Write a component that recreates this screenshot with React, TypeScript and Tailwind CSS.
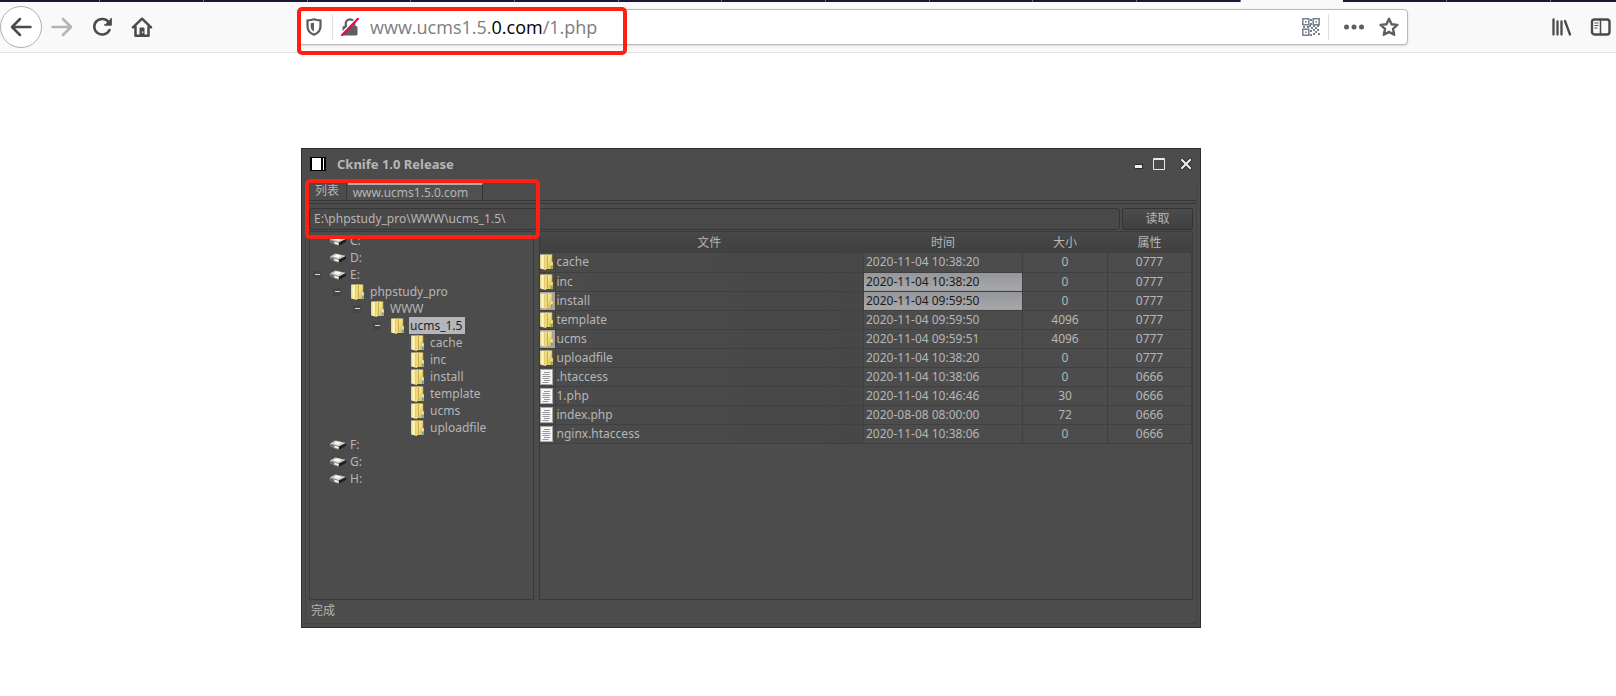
import type { ReactNode } from 'react';

type Entry = {
  name: string;
  time: string;
  size: string;
  attr: string;
  kind: 'dir' | 'file';
  iconLit?: boolean;
  timeLit?: boolean;
};

const entries: Entry[] = [
  { name: 'cache', time: '2020-11-04 10:38:20', size: '0', attr: '0777', kind: 'dir' },
  { name: 'inc', time: '2020-11-04 10:38:20', size: '0', attr: '0777', kind: 'dir', timeLit: true },
  { name: 'install', time: '2020-11-04 09:59:50', size: '0', attr: '0777', kind: 'dir', iconLit: true, timeLit: true },
  { name: 'template', time: '2020-11-04 09:59:50', size: '4096', attr: '0777', kind: 'dir' },
  { name: 'ucms', time: '2020-11-04 09:59:51', size: '4096', attr: '0777', kind: 'dir', iconLit: true },
  { name: 'uploadfile', time: '2020-11-04 10:38:20', size: '0', attr: '0777', kind: 'dir' },
  { name: '.htaccess', time: '2020-11-04 10:38:06', size: '0', attr: '0666', kind: 'file' },
  { name: '1.php', time: '2020-11-04 10:46:46', size: '30', attr: '0666', kind: 'file' },
  { name: 'index.php', time: '2020-08-08 08:00:00', size: '72', attr: '0666', kind: 'file' },
  { name: 'nginx.htaccess', time: '2020-11-04 10:38:06', size: '0', attr: '0666', kind: 'file' },
];

type Node = { label: string; level: number; open?: boolean; selected?: boolean };

const nodes: Node[] = [
  { label: 'C:', level: 0 },
  { label: 'D:', level: 0 },
  { label: 'E:', level: 0, open: true },
  { label: 'phpstudy_pro', level: 1, open: true },
  { label: 'WWW', level: 2, open: true },
  { label: 'ucms_1.5', level: 3, open: true, selected: true },
  { label: 'cache', level: 4 },
  { label: 'inc', level: 4 },
  { label: 'install', level: 4 },
  { label: 'template', level: 4 },
  { label: 'ucms', level: 4 },
  { label: 'uploadfile', level: 4 },
  { label: 'F:', level: 0 },
  { label: 'G:', level: 0 },
  { label: 'H:', level: 0 },
];

const indent = ['pl-[3px]', 'pl-[23px]', 'pl-[43px]', 'pl-[63px]', 'pl-[83px]'];

function FolderIcon() {
  return (
    <svg width="14" height="16" viewBox="0 0 14 16" className="shrink-0" aria-hidden="true">
      <defs>
        <linearGradient id="folderBack" x1="0" x2="1">
          <stop offset="0" stopColor="#e2cc6e" />
          <stop offset="0.4" stopColor="#fdf8c4" />
          <stop offset="1" stopColor="#e9d67c" />
        </linearGradient>
        <linearGradient id="folderFront" x1="0" x2="1" y2="1">
          <stop offset="0" stopColor="#fdf6b8" />
          <stop offset="0.5" stopColor="#ecd97c" />
          <stop offset="1" stopColor="#cfa92c" />
        </linearGradient>
      </defs>
      <path d="M0 .5h6V16L0 14.500z" fill="url(#folderBack)" />
      <path d="M6 .5h6v7l1 .8V15H6z" fill="url(#folderFront)" />
      <path d="M4.500 1.500L7.500 0v14.300L5 16z" fill="#ecd983" />
      <path d="M7.500 .5v13.800" stroke="#c4a136" strokeWidth=".8" />
      <path d="M4.500 2v13.500" stroke="#d8bf5c" strokeWidth=".6" />
      <path d="M12 .5v7" stroke="#c5a53c" strokeWidth=".6" />
      <rect x="11.200" y="11.500" width="1.200" height="3" fill="#3a9bd0" />
      <rect x="11.200" y="8.800" width="1.200" height="2.500" fill="#f8f5dc" />
    </svg>
  );
}

function FileIcon() {
  return (
    <svg width="14" height="16" viewBox="0 0 14 16" className="shrink-0" aria-hidden="true">
      <rect x=".5" y=".5" width="12" height="15" fill="#f6f6f6" stroke="#a8a8a8" />
      <path d="M4 3.500h6M2.500 5.500h7M2.500 7.500h8M2.500 9.500h7M4 11.500h6M2.500 13.500h6" stroke="#979797" />
    </svg>
  );
}

function DriveIcon() {
  return (
    <svg width="16" height="10" viewBox="0 0 16 10" className="shrink-0" aria-hidden="true">
      <path d="M0 3.500L5.500 .5 16 3v3L9.500 9.800 6 9 0 6z" fill="#777" />
      <path d="M0 3.500L5.500 .5 16 3 9 6.500z" fill="#c9c9c9" />
      <path d="M3.500 3.200l3.200-1.700 4.800 1.300-3.300 1.900z" fill="#fff" />
      <path d="M0 3.600l9 3v3L6 9 0 6z" fill="#8e8e8e" />
      <path d="M9 6.500L16 3v3L9.500 9.800 9 9.600z" fill="#1f1f1f" />
      <path d="M4.500 6.500l4 1.400" stroke="#fff" strokeWidth="1.600" />
      <path d="M1 5.500l2.500 1" stroke="#444" />
    </svg>
  );
}

function ToolButton({ label, children, className }: { label: string; children: ReactNode; className?: string }) {
  return (
    <button type="button" aria-label={label} className={`flex shrink-0 items-center justify-center ${className ?? ''}`}>
      {children}
    </button>
  );
}

function stripTab(i: number) {
  if (i === 12) return 'w-[102px] shrink-0 bg-[#f9f9fa]';
  if (i === 0) return 'w-[100px] shrink-0 border-r border-[#6d6c84]';
  if (i < 12 && i % 3 === 0) return 'w-[103px] shrink-0 border-r border-[#6d6c84]';
  return 'w-[104px] shrink-0 border-r border-[#6d6c84]';
}

function BrowserBar() {
  return (
    <header className="relative border-b border-[#e1e1e1] bg-[#f9f9fa]">
      <div className="flex h-[2px] overflow-hidden bg-[#1a1838]" aria-hidden="true">
        {Array.from({ length: 16 }, (_, i) => (
          <div key={i} className={stripTab(i)} />
        ))}
      </div>
      <div className="flex h-[50px] items-center pr-1">
        <ToolButton label="Back" className="size-[42px] rounded-full border border-[#b1b1b3] bg-white">
          <svg width="22" height="20" viewBox="0 0 22 20" fill="none" stroke="#4a4a4f" strokeWidth="2.500" strokeLinecap="round" strokeLinejoin="round">
            <path d="M10 2L2 10l8 8M2.500 10H20.500" />
          </svg>
        </ToolButton>
        <ToolButton label="Forward" className="ml-[9px]">
          <svg width="22" height="20" viewBox="0 0 22 20" fill="none" stroke="#b5b5b7" strokeWidth="2.500" strokeLinecap="round" strokeLinejoin="round">
            <path d="M12 2l8 8-8 8M19.500 10H1.500" />
          </svg>
        </ToolButton>
        <ToolButton label="Reload" className="ml-[19px]">
          <svg width="22" height="20" viewBox="0 0 22 20" fill="none" stroke="#4a4a4f" strokeWidth="2.500" strokeLinecap="round">
            <path d="M17 5.500A8 7.800 0 1 0 17.500 13" />
            <path d="M19.500 1v7.500H12z" fill="#4a4a4f" stroke="none" />
            <path d="M19 1.800v6h-6" strokeWidth="1.500" strokeLinejoin="round" />
          </svg>
        </ToolButton>
        <ToolButton label="Home" className="ml-[17px]">
          <svg width="22" height="20" viewBox="0 0 22 20" fill="none" stroke="#4a4a4f" strokeWidth="2.500" strokeLinecap="round" strokeLinejoin="round">
            <path d="M2 10.300L11 1.700l9 8.600M4.500 10v8.700h13V10" />
            <path d="M9 18v-7h4v7" fill="#4a4a4f" strokeWidth="1" />
            <path d="M11.700 14.800v.8" stroke="#fff" strokeWidth="1.200" />
          </svg>
        </ToolButton>

        <div className="ml-[145px] flex h-9 min-w-0 flex-1 items-center rounded-sm border border-[#b8b8ba] bg-white shadow-sm">
          <ToolButton label="Tracking protection" className="ml-[7px]">
            <svg width="16" height="18" viewBox="0 0 16 18">
              <path d="M8 1.300c2 .9 4.500 1 6.500 1V8c0 4.500-2.500 7.300-6.500 8.700C4 15.300 1.500 12.500 1.500 8V2.300c2 0 4.500-.1 6.500-1z" fill="none" stroke="#5f5f63" strokeWidth="2.300" strokeLinejoin="round" />
              <path d="M8 4.500v9C5.700 12.500 4.700 10.700 4.700 8V5.200c1.100 0 2.300-.2 3.300-.7z" fill="#5f5f63" />
            </svg>
          </ToolButton>
          <div className="ml-[10px] h-[26px] w-px bg-[#e0e0e0]" />
          <ToolButton label="Connection is not secure" className="ml-2">
            <svg width="18" height="18" viewBox="0 0 18 18">
              <rect x="1.500" y="8" width="15" height="9.500" rx="1.500" fill="#5f5f63" />
              <path d="M4.800 8V5.500a4.200 4.200 0 0 1 8.400 0V8" fill="none" stroke="#5f5f63" strokeWidth="2.300" />
              <path d="M-.5 16.500L16 0" stroke="#fff" strokeWidth="2" />
              <path d="M1 17.300L17 .8" stroke="#ff0039" strokeWidth="2.200" strokeLinecap="round" />
            </svg>
          </ToolButton>
          <div className="ml-[11px] grid min-w-0 flex-1 items-center font-['Open_Sans','Noto_Sans_CJK_SC',sans-serif] text-lg leading-6">
            <div className="col-start-1 row-start-1 text-[#7d7d80]" aria-hidden="true">
              www.ucms1.5.<span className="text-black">0.com</span>/1.php
            </div>
            <input
              aria-label="Address"
              defaultValue="www.ucms1.5.0.com/1.php"
              className="col-start-1 row-start-1 w-full bg-transparent text-transparent caret-black outline-none"
            />
          </div>
          <ToolButton label="QR code">
            <svg width="18" height="18" viewBox="0 0 18 18" fill="none" stroke="#76808f" strokeWidth="1.500">
              <path d="M.8.8h6v6h-6zM11.200.8h6v6h-6zM.8 11.200h6v6h-6z" />
              <path d="M3 3h1.600v1.600H3zM13.400 3H15v1.600h-1.600zM3 13.400h1.600V15H3z" fill="#76808f" stroke="none" />
              <path d="M8 1h2v2H8zM8 5h2v2H8zM1 8h2v2H1zM5 8h2v2H5zM7 7h2v2H7zM9 9h2v2H9zM11 7h2v2h-2zM15 7h2v2h-2zM13 9h2v2h-2zM11 11h2v2h-2zM15 11h2v2h-2zM8 12h2v2H8zM13 13h2v2h-2zM11 15h2v2h-2zM16 15h2v2h-2zM8 16h2v2H8z" fill="#76808f" stroke="none" />
            </svg>
          </ToolButton>
          <div className="ml-2 h-[26px] w-px bg-[#e0e0e0]" />
          <ToolButton label="Page actions" className="ml-[14px]">
            <svg width="22" height="6" viewBox="0 0 22 6" fill="#5f5f63">
              <circle cx="3.500" cy="3" r="2.500" />
              <circle cx="11" cy="3" r="2.500" />
              <circle cx="18.500" cy="3" r="2.500" />
            </svg>
          </ToolButton>
          <ToolButton label="Bookmark" className="mr-2 ml-[14px]">
            <svg width="20" height="20" viewBox="0 0 20 20" fill="none" stroke="#5f5f63" strokeWidth="2.400" strokeLinejoin="round">
              <path d="M10 1.800l2.500 5.400 5.900.7-4.400 4 1.200 5.900L10 14.900l-5.200 2.900L6 11.900l-4.400-4 5.900-.7z" />
            </svg>
          </ToolButton>
        </div>

        <ToolButton label="Library" className="ml-36">
          <svg width="20" height="18" viewBox="0 0 20 18" fill="none" stroke="#4a4a4f" strokeWidth="2.300" strokeLinecap="round">
            <path d="M1.500 1.500v15M5.500 3.500v13M9.500 3.500v13M13 3l5 13.500" />
          </svg>
        </ToolButton>
        <ToolButton label="Sidebars" className="ml-[18px]">
          <svg width="22" height="18" viewBox="0 0 22 18" fill="none" stroke="#4a4a4f" strokeLinecap="round">
            <rect x="2" y="1.500" width="17.500" height="15" rx="2.500" strokeWidth="2.400" />
            <path d="M10.500 2v14" strokeWidth="1.500" />
            <path d="M5 5h3M5 7.500h3M5 10h2" strokeWidth="1.200" />
          </svg>
        </ToolButton>
      </div>
      <div className="pointer-events-none absolute top-[7px] left-[297px] h-[48px] w-[330px] rounded-[5px] border-4 border-[#ff2014]" />
    </header>
  );
}

function Tree() {
  return (
    <ul role="tree" aria-label="目录" className="w-[225px] shrink-0 border border-[#3a3a3a]">
      {nodes.map((n) => (
        <li
          key={`${n.level}${n.label}`}
          role="treeitem"
          aria-level={n.level + 1}
          aria-selected={n.selected ?? false}
          className={`flex h-[17px] items-center ${indent[n.level]}`}
        >
          {n.open ? (
            <button type="button" aria-label={`折叠 ${n.label}`} className="flex size-2 items-center justify-center rounded-xs bg-[#454545]">
              <span className="h-px w-[5px] bg-[#d8d8d8]" />
            </button>
          ) : (
            <span className="size-2" />
          )}
          <span className={n.level === 0 ? 'ml-[9px] flex w-[19px]' : 'ml-[10px] flex w-[18px]'}>
            {n.level === 0 ? <DriveIcon /> : <FolderIcon />}
          </span>
          <span className={n.selected ? 'bg-[#b3b7bb] pr-[3px] pl-px leading-[17px] text-[#20222c]' : 'pl-px leading-[17px]'}>
            {n.label}
          </span>
        </li>
      ))}
    </ul>
  );
}

function FileTable() {
  return (
    <div className="min-w-0 flex-1 border border-[#3a3a3a]">
      <table className="w-full table-fixed border-collapse">
        <colgroup>
          <col className="w-[15px]" />
          <col />
          <col className="w-[159px]" />
          <col className="w-[85px]" />
          <col className="w-[84px]" />
        </colgroup>
        <thead>
          <tr className="h-[21px] bg-linear-to-b from-[#484848] to-[#404040]">
            <td className="p-0" />
            <th scope="col" className="p-0 font-normal">文件</th>
            <th scope="col" className="p-0 font-normal">时间</th>
            <th scope="col" className="p-0 font-normal">大小</th>
            <th scope="col" className="p-0 font-normal">属性</th>
          </tr>
        </thead>
        <tbody>
          {entries.map((e) => (
            <tr key={e.name} className="h-[19px] border-b border-[#404040] leading-[18px]">
              <td className={e.iconLit ? 'border-r border-[#404040] bg-[#a2a4a8] p-0' : 'border-r border-[#404040] p-0'}>
                <span className="flex">{e.kind === 'dir' ? <FolderIcon /> : <FileIcon />}</span>
              </td>
              <td className="border-r border-[#404040] bg-linear-to-r from-[#4b4b4b] to-[#474747] py-0 pr-0 pl-px">{e.name}</td>
              <td
                className={
                  e.timeLit
                    ? 'border-r border-[#404040] bg-linear-to-b from-[#95969a] to-[#a6a8aa] py-0 pr-0 pl-[2px] text-[#1c1c1c]'
                    : 'border-r border-[#404040] py-0 pr-0 pl-[2px]'
                }
              >
                {e.time}
              </td>
              <td className="border-r border-[#404040] p-0 text-center">{e.size}</td>
              <td className="border-r border-[#404040] p-0 text-center">{e.attr}</td>
            </tr>
          ))}
        </tbody>
      </table>
    </div>
  );
}

function CknifeWindow() {
  return (
    <section
      aria-label="Cknife 1.0 Release"
      className="relative flex min-h-[480px] w-full max-w-[900px] flex-col border border-[#2e2e2e] bg-[#4c4c4c] p-[3px] text-xs text-[#b6b6b6]"
    >
      <div className="flex h-[30px] items-center px-[5px] pb-[6px]">
        <svg width="16" height="14" viewBox="0 0 16 14" aria-hidden="true">
          <path d="M0 0h16v14H0z" fill="#000" />
          <path d="M2 1h9v12H2zM13 1h1v12h-1z" fill="#fff" />
        </svg>
        <h1 className="ml-[11px] flex-1 text-[13px] leading-5 font-bold">Cknife 1.0 Release</h1>
        <button type="button" aria-label="最小化" className="flex h-4 w-2 items-center">
          <svg width="8" height="12" viewBox="0 0 8 12">
            <path d="M0 6h8v5H0z" fill="#2c2c2c" />
            <path d="M0 7h7v3H0z" fill="#eee" />
          </svg>
        </button>
        <button type="button" aria-label="最大化" className="ml-[10px]">
          <svg width="12" height="12" viewBox="0 0 12 12" fill="none">
            <path d="M.5.5h11v11H.5z" stroke="#e8e8e8" />
            <path d="M1 1.500h10" stroke="#e8e8e8" />
          </svg>
        </button>
        <button type="button" aria-label="关闭" className="ml-[15px]">
          <svg width="12" height="12" viewBox="0 0 12 12" strokeLinecap="square">
            <path d="M2 2l8 8M10 2l-8 8" stroke="#2c2c2c" strokeWidth="4" />
            <path d="M2 2l8 8M10 2l-8 8" stroke="#f0f0f0" strokeWidth="2" />
          </svg>
        </button>
      </div>

      <div className="flex flex-1 flex-col border-x border-b border-[#424242]">
        <div role="tablist" className="flex h-[18px]">
          <button type="button" role="tab" aria-selected="false" className="w-[41px] border-r border-[#3a3a3a] pl-[2px] text-center leading-[18px]">
            列表
          </button>
          <button type="button" role="tab" aria-selected="true" className="ml-px w-[135px] border-t-[3px] border-r border-t-[#b0b0b0] border-r-[#353535] bg-[#505050] pr-[9px] text-center leading-[14px]">
            www.ucms1.5.0.com
          </button>
        </div>
        <div className="h-1 border-y border-[#383838]" />
        <div className="flex flex-1 flex-col px-[3px] pt-1">
          <div className="flex gap-[2px]">
            <input
              aria-label="路径"
              defaultValue="E:\phpstudy_pro\WWW\ucms_1.5\"
              className="h-[22px] min-w-0 flex-1 rounded-[3px] border border-[#363636] bg-[#494949] px-1 pb-px outline-none"
            />
            <button type="button" className="h-[22px] w-[71px] rounded-xs border border-[#333] bg-linear-to-b from-[#4c4c4c] to-[#404040]">
              读取
            </button>
          </div>
          <div className="mt-px flex flex-1 gap-[5px]">
            <Tree />
            <FileTable />
          </div>
          <div role="status" className="h-[23px] pl-[2px] leading-[22px]">
            完成
          </div>
        </div>
      </div>
      <div className="pointer-events-none absolute top-[30px] left-[3px] h-[60px] w-[235px] rounded-[5px] border-4 border-[#ff2014]" />
    </section>
  );
}

export default function App() {
  return (
    <div className="min-h-screen bg-white font-['Noto_Sans','Noto_Sans_CJK_SC',sans-serif]">
      <BrowserBar />
      <main className="pt-[95px] pr-4 pb-[68px] pl-[301px]">
        <CknifeWindow />
      </main>
    </div>
  );
}
